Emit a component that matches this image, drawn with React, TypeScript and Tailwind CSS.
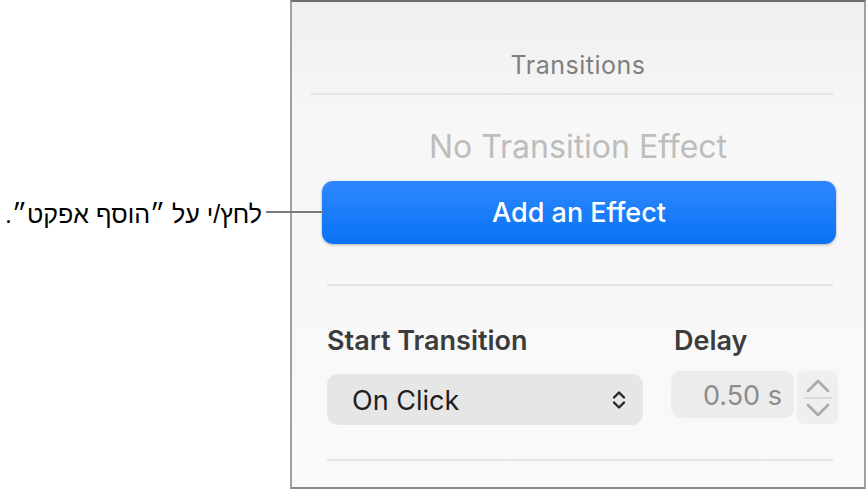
import React from "react";

function UpDown({ className }: { className?: string }) {
  return (
    <svg className={className} width="16" height="24" viewBox="0 0 16 24" fill="none">
      <path d="M3 9.5 8 4.5 13 9.5" stroke="#262626" strokeWidth="2.4" strokeLinecap="round" strokeLinejoin="round" />
      <path d="M3 14.5 8 19.5 13 14.5" stroke="#262626" strokeWidth="2.4" strokeLinecap="round" strokeLinejoin="round" />
    </svg>
  );
}

function Stepper() {
  return (
    <div className="ml-[3px] mt-[-3px] flex h-[53px] w-[41px] flex-col items-center justify-center rounded-[8px] bg-[#efefef]">
      <svg width="34" height="50" viewBox="0 0 34 50" fill="none">
        <path d="M7 18 17 8 27 18" stroke="#ababab" strokeWidth="2.8" strokeLinecap="round" strokeLinejoin="round" />
        <path d="M3 25H31" stroke="#d2d2d2" strokeWidth="1.5" />
        <path d="M7 32 17 42 27 32" stroke="#ababab" strokeWidth="2.8" strokeLinecap="round" strokeLinejoin="round" />
      </svg>
    </div>
  );
}

export default function App() {
  return (
    <div className="relative flex h-[489px] w-[867px] bg-white font-['Inter',sans-serif]">
      {/* callout */}
      <div className="flex w-[290px] shrink-0 items-start justify-end pr-[28px] pt-[199px]">
        <p dir="rtl" className="font-['Liberation_Sans','DejaVu_Sans',sans-serif] text-[25px] leading-[30px] text-black">
          לחץ/י על ״הוסף אפקט״.
        </p>
      </div>
      <div className="absolute left-[266px] top-[211px] h-[2px] w-[57px] bg-[#7a7a7a]" />

      {/* inspector panel */}
      <div className="flex h-[489px] w-[576px] flex-col border-x-2 border-b-2 border-t-2 border-x-[#a0a0a0] border-b-[#8a8a8a] border-t-[#6e6e6e] bg-[linear-gradient(180deg,#efefef_0px,#f7f7f7_120px,#f9f9f9_100%)]">
        <div className="mt-[48px] h-[30px] text-center text-[25px] leading-[30px] tracking-[0.02em] text-[#7f7f7f]">Transitions</div>
        <div className="ml-[18px] mr-[30px] mt-[13px] h-[2px] bg-[#e6e6e6]" />

        <div className="mt-[34px] h-[36px] text-center text-[32px] leading-[36px] text-[#bdbdbd]">No Transition Effect</div>

        <button className="ml-[30px] mt-[16px] flex h-[63px] w-[514px] items-center justify-center rounded-[11px] bg-[linear-gradient(180deg,#2f87ff,#0873f4)] pt-[2px] text-[27px] font-medium text-white shadow-[0_1px_3px_rgba(0,0,0,0.3)]">
          Add an Effect
        </button>

        <div className="ml-[35px] mt-[40px] h-[2px] w-[506px] bg-[#e4e4e4]" />

        <div className="ml-[35px] mt-[40px] flex h-[30px] text-[27px] font-semibold leading-[30px] text-[#3c3c3c]">
          <span className="w-[347px]">Start Transition</span>
          <span>Delay</span>
        </div>

        <div className="ml-[35px] mt-[18px] flex items-start">
          <div className="flex h-[51px] w-[316px] items-center justify-between rounded-[11px] bg-[#e6e6e6] pl-[25px] pr-[16px] pt-[4px]">
            <span className="text-[27px] text-[#1e1e1e]">On Click</span>
            <UpDown className="-mt-[4px]" />
          </div>
          <div className="ml-[28px] mt-[-3px] flex h-[47px] w-[123px] items-center justify-end rounded-[10px] bg-[#ececec] pr-[12px] pt-[4px] text-[27px] text-[#8c8c8c]">
            0.50 s
          </div>
          <Stepper />
        </div>

        <div className="ml-[35px] mt-[34px] h-[2px] w-[506px] bg-[#e4e4e4]" />
      </div>
    </div>
  );
}
